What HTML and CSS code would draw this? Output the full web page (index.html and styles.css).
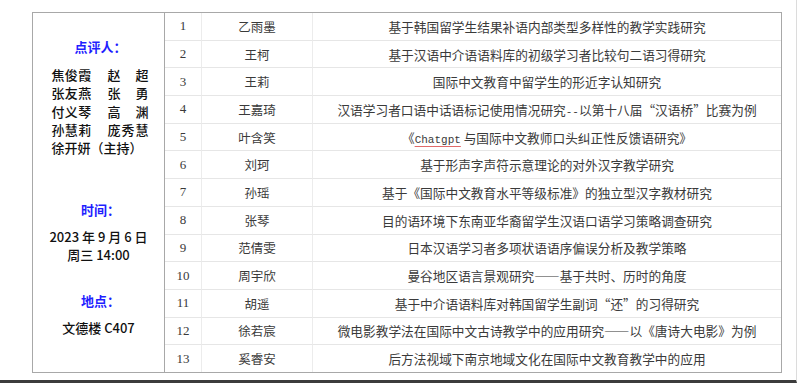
FILE: index.html
```html
<!DOCTYPE html>
<html lang="zh-CN">
<head>
<meta charset="utf-8">
<title>点评安排</title>
<link rel="stylesheet" href="styles.css">
</head>
<body>
<div class="page">
  <table class="schedule">
    <tbody>
      <tr>
        <td class="info" rowspan="13">
          <div class="info-inner">
            <div class="label">点评人：</div>
            <div class="names">
              <div class="pair"><span class="n1">焦俊霞</span><span class="n2">赵超</span></div>
              <div class="pair"><span class="n1">张友燕</span><span class="n2">张勇</span></div>
              <div class="pair"><span class="n1">付义琴</span><span class="n2">高渊</span></div>
              <div class="pair"><span class="n1">孙慧莉</span><span class="n2">庞秀慧</span></div>
              <div class="pair">徐开妍（主持）</div>
            </div>
            <div class="label label-time">时间：</div>
            <div class="val">2023 年 9 月 6 日</div>
            <div class="val">周三 14:00</div>
            <div class="label label-place">地点：</div>
            <div class="val">文德楼 C407</div>
          </div>
        </td>
        <td class="no">1</td><td class="name">乙雨墨</td><td class="title">基于韩国留学生结果补语内部类型多样性的教学实践研究</td>
      </tr>
      <tr><td class="no">2</td><td class="name">王柯</td><td class="title">基于汉语中介语语料库的初级学习者比较句二语习得研究</td></tr>
      <tr><td class="no">3</td><td class="name">王莉</td><td class="title">国际中文教育中留学生的形近字认知研究</td></tr>
      <tr><td class="no">4</td><td class="name">王嘉琦</td><td class="title">汉语学习者口语中话语标记使用情况研究<span class="mono">--</span>以第十八届“汉语桥”比赛为例</td></tr>
      <tr><td class="no">5</td><td class="name">叶含笑</td><td class="title">《<span class="latin">Chatgpt</span> 与国际中文教师口头纠正性反馈语研究》</td></tr>
      <tr><td class="no">6</td><td class="name">刘珂</td><td class="title">基于形声字声符示意理论的对外汉字教学研究</td></tr>
      <tr><td class="no">7</td><td class="name">孙瑶</td><td class="title">基于《国际中文教育水平等级标准》的独立型汉字教材研究</td></tr>
      <tr><td class="no">8</td><td class="name">张琴</td><td class="title">目的语环境下东南亚华裔留学生汉语口语学习策略调查研究</td></tr>
      <tr><td class="no">9</td><td class="name">范倩雯</td><td class="title">日本汉语学习者多项状语语序偏误分析及教学策略</td></tr>
      <tr><td class="no">10</td><td class="name">周宇欣</td><td class="title">曼谷地区语言景观研究——基于共时、历时的角度</td></tr>
      <tr><td class="no">11</td><td class="name">胡遥</td><td class="title">基于中介语语料库对韩国留学生副词“还”的习得研究</td></tr>
      <tr><td class="no">12</td><td class="name">徐若宸</td><td class="title">微电影教学法在国际中文古诗教学中的应用研究——以《唐诗大电影》为例</td></tr>
      <tr><td class="no">13</td><td class="name">奚睿安</td><td class="title">后方法视域下南京地域文化在国际中文教育教学中的应用</td></tr>
    </tbody>
  </table>
</div>
</body>
</html>
```

FILE: styles.css
```css
html, body {
  margin: 0;
  padding: 0;
  background: #ffffff;
}

.page {
  box-sizing: border-box;
  width: 797px;
  height: 383px;
  padding: 12px 0 0 32px;
  border-right: 1px solid #dcdcdc;
  border-bottom: 3px solid #3c3c3c;
}

.schedule {
  border-collapse: separate;
  border-spacing: 0;
  border: 1px solid #a8a8a8;
  width: 750px;
  table-layout: fixed;
  font-family: "Noto Sans CJK SC", "Noto Sans", sans-serif;
  color: #3a3a3a;
}

.schedule td {
  padding: 0;
  height: 26.7px;
  border-bottom: 1px solid #e6e6e6;
  border-left: 1px solid #ececec;
  text-align: center;
  vertical-align: middle;
  white-space: nowrap;
}

.schedule tr:last-child td {
  border-bottom: none;
}

.schedule td.info {
  width: 131px;
  border-left: none;
  border-bottom: none;
  border-right: 1px solid #a8a8a8;
  vertical-align: top;
  color: #111;
}

.schedule td.no {
  width: 36px;
  border-left: none;
  font-family: "Liberation Serif", "Times New Roman", serif;
  font-size: 13px;
}

.schedule td.name {
  width: 110px;
  font-size: 12.5px;
}

.schedule td.title {
  font-size: 12.7px;
}

.mono {
  font-family: "Liberation Mono", monospace;
  font-size: 11px;
}

.latin {
  font-family: "Liberation Mono", monospace;
  font-size: 11px;
  text-decoration: underline;
  text-decoration-color: #e06a6a;
  text-underline-offset: 3px;
}

.info-inner {
  display: flex;
  flex-direction: column;
  align-items: center;
  padding-top: 25px;
}

.label {
  color: #1f1fff;
  font-weight: 700;
  font-size: 13px;
  line-height: 18px;
  padding-left: 4px;
}

.names {
  margin-top: 10px;
  width: 97px;
  font-size: 13px;
  line-height: 18.3px;
  font-weight: 500;
  padding-left: 3px;
}

.pair {
  display: flex;
  white-space: nowrap;
}

.n1 {
  width: 40px;
  letter-spacing: 0.3px;
}

.n2 {
  width: 41px;
  margin-left: 16px;
  text-align: justify;
  text-align-last: justify;
}

.label-time {
  margin-top: 44px;
}

.label-place {
  margin-top: 28px;
}

.label + .val {
  margin-top: 9px;
}

.val {
  font-size: 13px;
  line-height: 18px;
  font-weight: 500;
}
```
